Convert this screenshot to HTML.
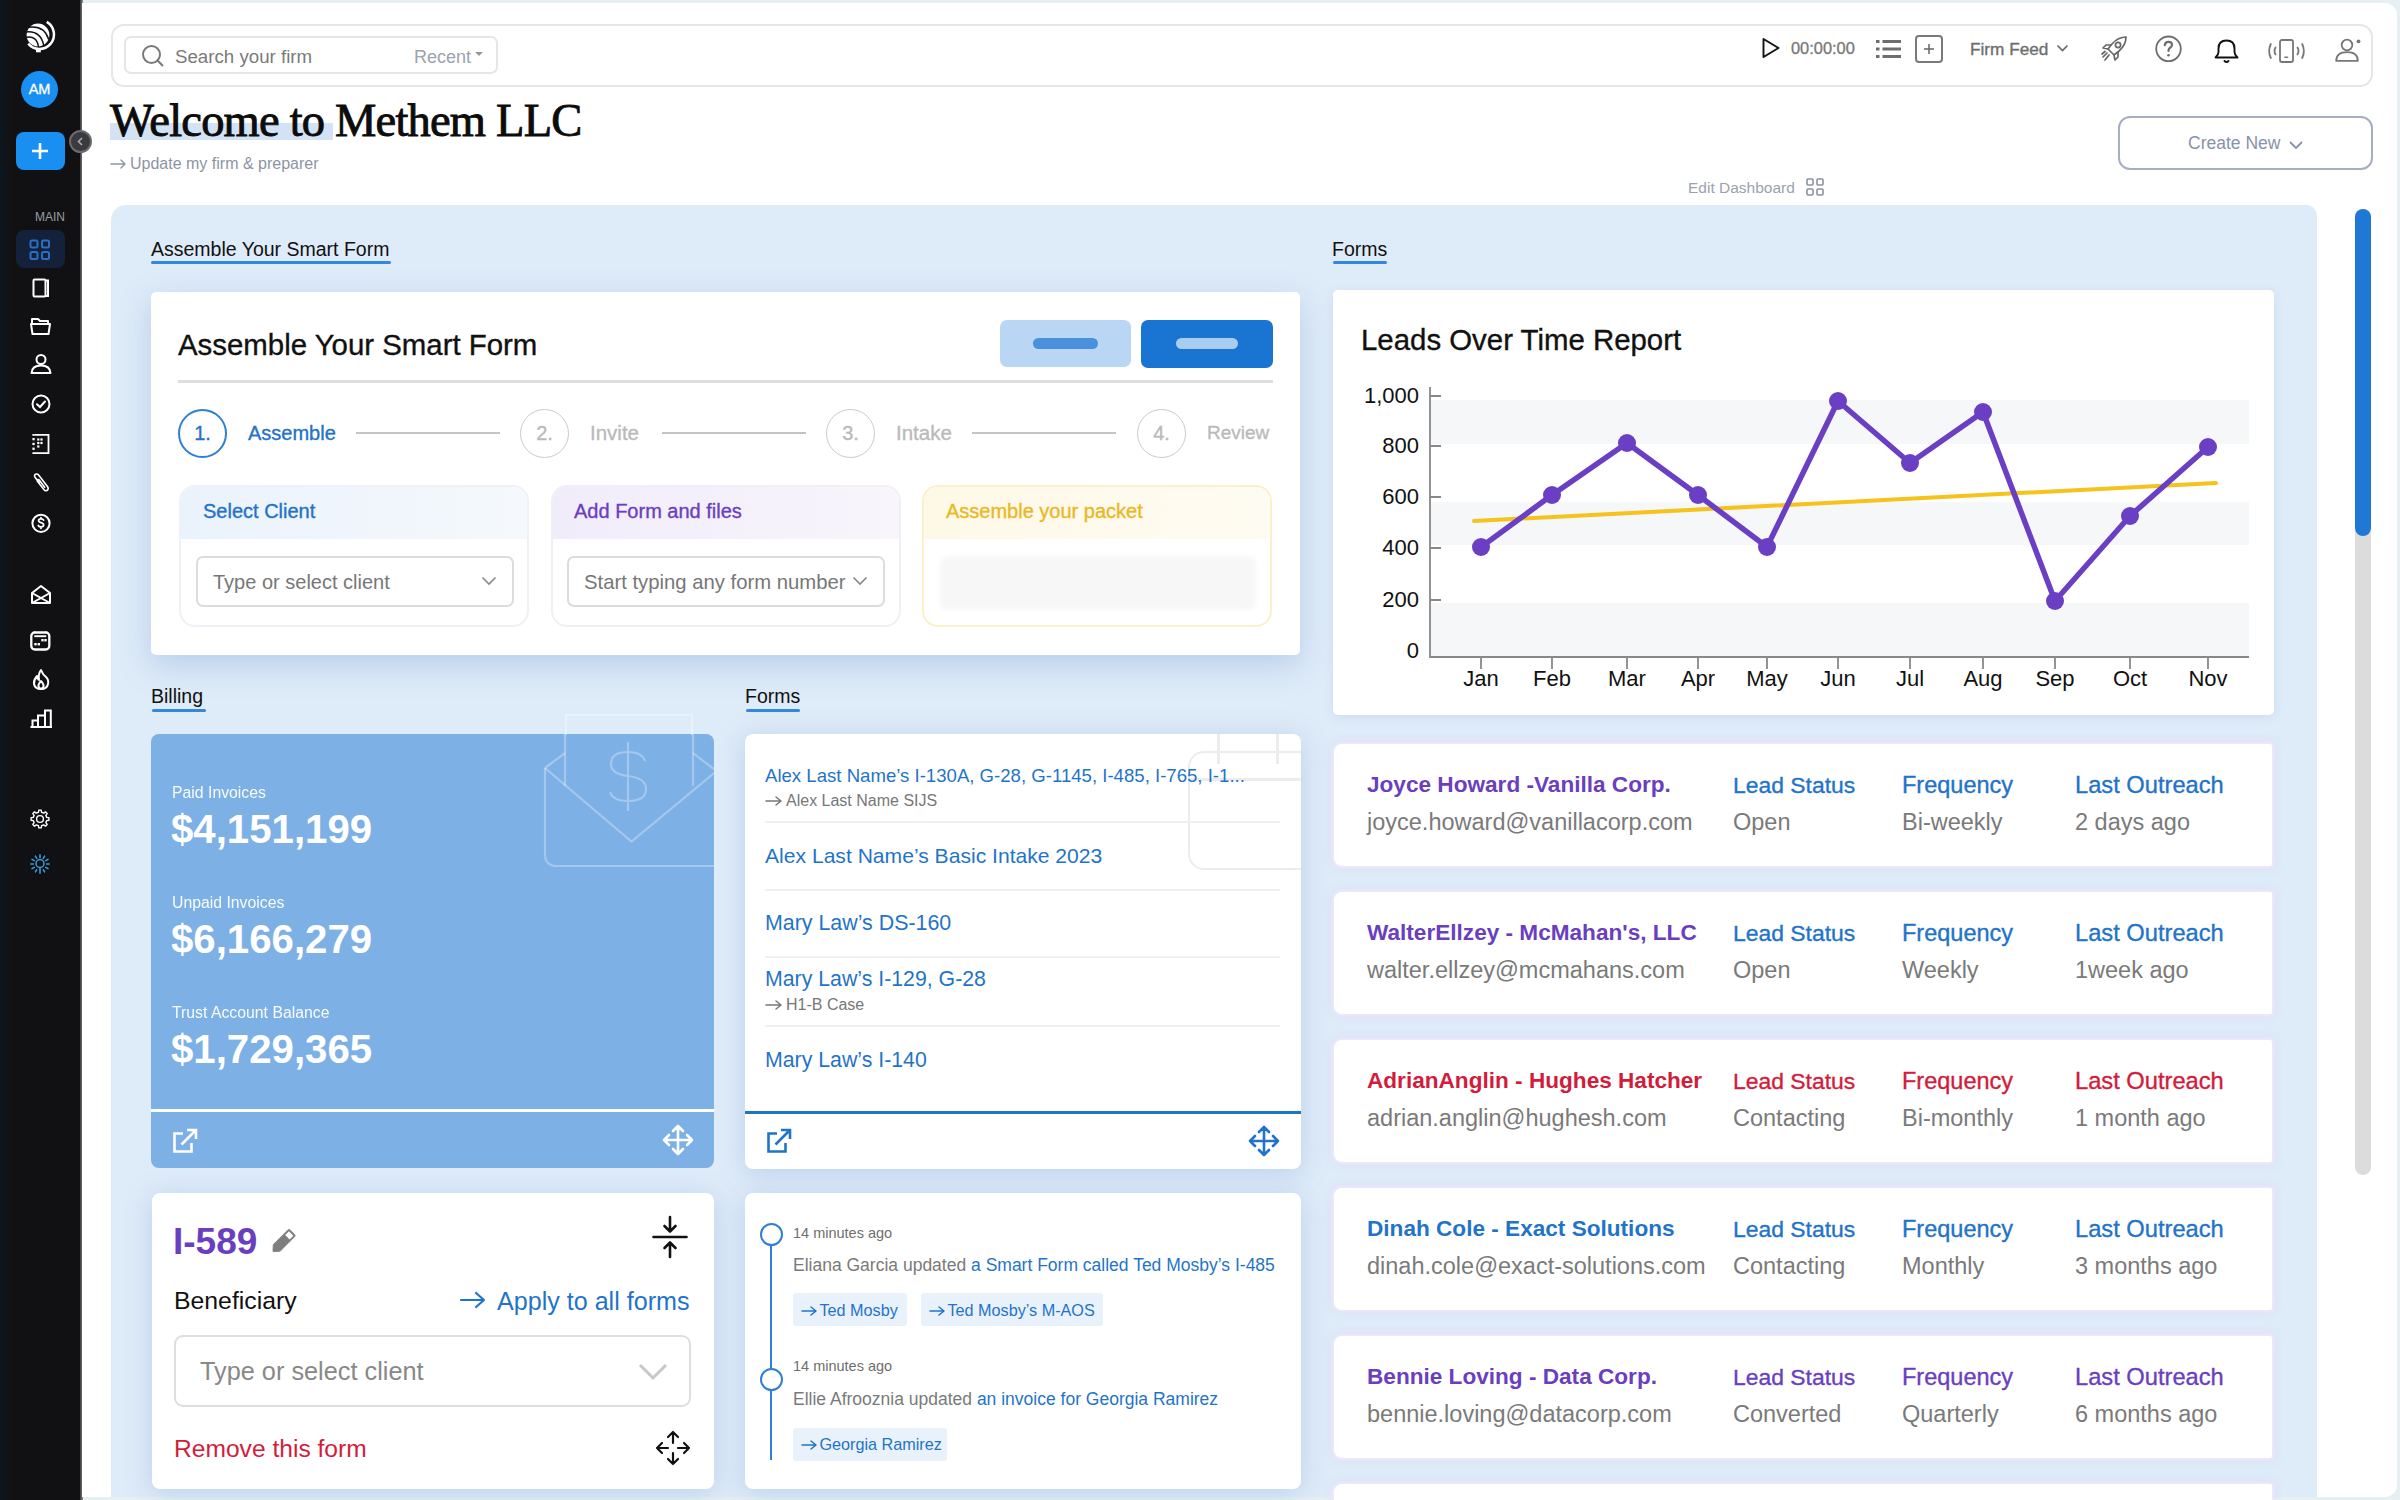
<!DOCTYPE html>
<html><head><meta charset="utf-8">
<style>
*{margin:0;padding:0;box-sizing:border-box}
html,body{width:2400px;height:1500px;overflow:hidden;background:#e6eff1;font-family:"Liberation Sans",sans-serif;color:#111}
.a{position:absolute}
.t{position:absolute;white-space:nowrap;line-height:1}
.m{-webkit-text-stroke:0.35px currentColor}
svg{position:absolute;overflow:visible}
#side{left:0;top:0;width:82px;height:1500px;background:linear-gradient(90deg,#0c1620 0,#111318 6px,#111114 12px)}
#topstrip{left:82px;top:0;width:2318px;height:4px;background:#e9f0f4}
</style></head><body>
<!-- SIDEBAR -->
<div id="side" class="a"></div>
<div class="a" style="left:79.5px;top:0;width:3px;height:1500px;background:linear-gradient(90deg,#3a3a3c,#6a6a6c 60%,#9a9a9c)"></div>
<div class="a" style="left:82px;top:3px;width:2315px;height:1494px;background:#fff;border-radius:0 12px 12px 0"></div>

<!-- sidebar content -->
<svg style="left:20px;top:15px" width="40" height="40" viewBox="0 0 40 40">
  <circle cx="18" cy="20" r="11.4" fill="#fff"/>
  <g fill="none" stroke="#111214" stroke-width="1.5" stroke-linecap="round">
    <path d="M9.5 12.3Q24 10.5 28.5 24"/><path d="M6 17Q21 15.5 23.8 31"/><path d="M6.5 22.3Q17 20.5 18.5 32"/>
  </g>
  <path d="M26.75 6.94A14.5 14.5 0 1 1 8.23 28.63" fill="none" stroke="#fff" stroke-width="2.5" stroke-linecap="butt"/>
  <rect x="16" y="33.5" width="4.8" height="3.8" fill="#fff"/>
</svg>
<div class="a" style="left:21px;top:71px;width:37px;height:37px;border-radius:50%;background:#1a8ff2"></div>
<div class="t m" style="left:21px;top:82px;width:37px;text-align:center;font-size:14.5px;color:#fff">AM</div>
<div class="a" style="left:16px;top:132px;width:49px;height:38px;border-radius:8px;background:#1a8ff2"></div>
<svg style="left:30px;top:141px" width="20" height="20" viewBox="0 0 20 20" stroke="#fff" stroke-width="2.6"><path d="M10 2V18M2 10H18"/></svg>
<div class="a" style="left:69px;top:130px;width:23px;height:23px;border-radius:50%;background:#3a3b3e;border:2px solid #6a6b6e"></div>
<svg style="left:76px;top:137px" width="9" height="9" viewBox="0 0 9 9" fill="none" stroke="#aaa" stroke-width="1.6"><path d="M6 1L2.5 4.5L6 8"/></svg>
<div class="t" style="left:35px;top:211px;font-size:12px;color:#9a9ca0">MAIN</div>
<div class="a" style="left:16px;top:230px;width:49px;height:38px;border-radius:8px;background:#13223a"></div>
<svg style="left:29px;top:239px" width="22" height="22" viewBox="0 0 22 22" fill="none" stroke="#2a6fc4" stroke-width="2"><rect x="1.5" y="1.5" width="7" height="7" rx="1.5"/><rect x="13" y="1.5" width="7" height="7" rx="1.5"/><rect x="1.5" y="13" width="7" height="7" rx="1.5"/><rect x="13" y="13" width="7" height="7" rx="1.5"/></svg>
<svg style="left:30px;top:277px" width="22" height="22" viewBox="0 0 22 22" fill="none" stroke="#fff" stroke-width="2"><rect x="3.5" y="2.5" width="12" height="17" rx="1"/><path d="M16 3.5H18V19H16"/></svg>
<svg style="left:29px;top:315px" width="24" height="22" viewBox="0 0 24 22" fill="none" stroke="#fff" stroke-width="2" stroke-linejoin="round"><path d="M3 8V4H9L11 6H19V8"/><path d="M2 9H21L19.5 19H3.5Z"/></svg>
<svg style="left:29px;top:353px" width="24" height="22" viewBox="0 0 24 22" fill="none" stroke="#fff" stroke-width="2"><circle cx="12" cy="6.5" r="4.5"/><path d="M2.5 20Q3 12.5 12 12.5Q21 12.5 21.5 20Z" stroke-linejoin="round"/></svg>
<svg style="left:30px;top:393px" width="22" height="22" viewBox="0 0 22 22" fill="none" stroke="#fff" stroke-width="2"><circle cx="11" cy="11" r="8.5"/><path d="M7 11.2L10 14L15 8.5" stroke-linecap="round"/></svg>
<svg style="left:30px;top:433px" width="22" height="22" viewBox="0 0 22 22" fill="#fff"><path d="M2.4 1H19.4V21H2.4V19.2H17.6V2.8H4.2V1Z"/><rect x="2.4" y="1" width="1.8" height="1.8"/><rect x="2.4" y="5" width="2.3" height="2.3"/><rect x="2.4" y="9.8" width="2.3" height="2.3"/><rect x="2.4" y="14.6" width="2.3" height="2.3"/><rect x="7.2" y="5.4" width="2.2" height="2.2"/><rect x="10.4" y="5.4" width="2.2" height="2.2"/><rect x="7.2" y="8.9" width="2.2" height="2.2"/><rect x="10.4" y="8.9" width="2.2" height="2.2"/><rect x="7.2" y="12.4" width="2.2" height="2.2"/></svg>
<svg style="left:30px;top:472px" width="22" height="22" viewBox="0 0 22 22" fill="none" stroke="#fff" stroke-width="1.6" stroke-linecap="round"><path d="M9.2 10.8L5 5.2Q3.8 3.3 5.6 2.3Q7.3 1.4 8.6 3.1L17.6 14.8Q19 17 17.2 18.3Q15.3 19.5 13.9 17.6L7.4 9.2Q6.8 8.2 7.7 7.7Q8.5 7.2 9.2 8.1L14.7 15.2"/></svg>
<svg style="left:30px;top:512px" width="22" height="22" viewBox="0 0 22 22" fill="none" stroke="#fff" stroke-width="2"><circle cx="11" cy="11.3" r="8.6"/><path d="M13.6 8.2Q13 6.9 11 6.9Q8.6 6.9 8.6 8.6Q8.6 10.1 11 10.6Q13.6 11.2 13.6 13Q13.6 14.9 11 14.9Q9 14.9 8.3 13.5M11 5.6V6.9M11 14.9V16.4" stroke-width="1.7" stroke-linecap="round"/></svg>

<svg style="left:29px;top:583px" width="24" height="24" viewBox="0 0 24 24" fill="none" stroke="#fff" stroke-width="2" stroke-linejoin="round"><path d="M3 10L12 3L21 10V20H3Z"/><path d="M3 10L21 20M21 10L3 20"/></svg>
<svg style="left:29px;top:629px" width="24" height="24" viewBox="0 0 24 24" fill="none" stroke="#fff" stroke-width="2.3"><rect x="2.3" y="3.5" width="18" height="17" rx="3.5"/><path d="M5.5 2.5V4M17 2.5V4" stroke-width="1.6"/><path d="M5.3 7.2H17.2" stroke-width="1.9"/><g fill="#fff" stroke="none"><rect x="12.3" y="10" width="2.4" height="2.4"/><rect x="15.3" y="10" width="2.4" height="2.4"/><rect x="5.3" y="14" width="2.4" height="2.4"/><rect x="8.6" y="14" width="2.4" height="2.4"/></g></svg>
<svg style="left:30px;top:668px" width="22" height="24" viewBox="0 0 22 24" fill="none" stroke="#fff" stroke-width="2" stroke-linejoin="round"><path d="M11 2Q13 7 16 9Q19 12 18 16Q17 21 11 21Q5 21 4 16Q3.5 12 7 8Q7 11 9 12Q8 6 11 2Z"/><path d="M11 21Q8 20 8.5 17Q9 15 11 13Q13 15 13.5 17Q14 20 11 21"/></svg>
<svg style="left:29px;top:707px" width="24" height="22" viewBox="0 0 24 22" fill="none" stroke="#fff" stroke-width="2"><path d="M1.5 20H23"/><path d="M3.5 20V13.5H9V20M9 20V8.5H16V20M16 20V3.5H21.8V20"/></svg>
<svg style="left:28px;top:807px" width="24" height="24" viewBox="0 0 24 24" fill="none" stroke="#fff" stroke-width="1.4" stroke-linejoin="round"><circle cx="12" cy="12" r="3.4"/><path d="M18.71 10.39 L20.92 10.80 L20.92 13.20 L18.71 13.61 L17.88 15.61 L19.15 17.46 L17.46 19.15 L15.61 17.88 L13.61 18.71 L13.20 20.92 L10.80 20.92 L10.39 18.71 L8.39 17.88 L6.54 19.15 L4.85 17.46 L6.12 15.61 L5.29 13.61 L3.08 13.20 L3.08 10.80 L5.29 10.39 L6.12 8.39 L4.85 6.54 L6.54 4.85 L8.39 6.12 L10.39 5.29 L10.80 3.08 L13.20 3.08 L13.61 5.29 L15.61 6.12 L17.46 4.85 L19.15 6.54 L17.88 8.39Z"/></svg>
<svg style="left:28px;top:852px" width="24" height="24" viewBox="0 0 24 24" fill="none" stroke="#3a9ee0" stroke-width="1.5" stroke-linecap="round"><circle cx="12" cy="11.5" r="4"/><path d="M12.00 16.20L12.00 21.20M8.70 17.72L7.40 19.97M6.28 15.30L4.03 16.60M5.40 12.00L2.80 12.00M6.28 8.70L4.03 7.40M8.70 6.28L7.40 4.03M12.00 5.40L12.00 2.80M15.30 6.28L16.60 4.03M17.72 8.70L19.97 7.40M18.60 12.00L21.20 12.00M17.72 15.30L19.97 16.60M15.30 17.72L16.60 19.97"/></svg>


<!-- TOP BAR -->
<div class="a" style="left:111px;top:24px;width:2262px;height:63px;border:2px solid #e6e6e6;border-radius:13px"></div>
<div class="a" style="left:124px;top:36px;width:374px;height:38px;border:2px solid #e6e6e6;border-radius:7px"></div>


<!-- top bar content -->
<svg style="left:141px;top:44px" width="24" height="24" viewBox="0 0 24 24" fill="none" stroke="#7a7a7a" stroke-width="2"><circle cx="10.5" cy="10.5" r="8.5"/><path d="M16.8 16.8L21.5 21.5" stroke-linecap="round"/></svg>
<div class="t" style="left:175px;top:47.5px;font-size:18.7px;color:#7a7a7a">Search your firm</div>
<div class="t" style="left:414px;top:47.5px;font-size:18px;color:#9ba3ae">Recent</div>
<svg style="left:475px;top:52px" width="8" height="5" viewBox="0 0 8 5" fill="#999"><path d="M0 0H8L4 4Z"/></svg>
<svg style="left:1761px;top:37px" width="24" height="24" viewBox="0 0 24 24" fill="none" stroke="#111" stroke-width="1.9" stroke-linejoin="round"><path d="M2.5 2L17.5 11L2.5 20Z"/></svg>
<div class="t m" style="left:1791px;top:39.5px;font-size:16.4px;color:#7a7a7a">00:00:00</div>
<svg style="left:1876px;top:38px" width="26" height="22" viewBox="0 0 26 22" fill="#6e6e6e"><rect x="0" y="2" width="3.5" height="3"/><rect x="0" y="9.5" width="3.5" height="3"/><rect x="0" y="17" width="3.5" height="3"/><rect x="6.5" y="2" width="18.5" height="3"/><rect x="6.5" y="9.5" width="18.5" height="3"/><rect x="6.5" y="17" width="18.5" height="3"/></svg>
<div class="a" style="left:1915px;top:35px;width:28px;height:28px;border:2px solid #7a7a7a;border-radius:4px"></div>
<svg style="left:1923px;top:43px" width="12" height="12" viewBox="0 0 12 12" stroke="#666" stroke-width="1.5"><path d="M6 1V11M1 6H11"/></svg>
<div class="t m" style="left:1970px;top:41px;font-size:17.2px;color:#6e6e6e">Firm Feed</div>
<svg style="left:2056px;top:44px" width="13" height="9" viewBox="0 0 13 9" fill="none" stroke="#666" stroke-width="1.6"><path d="M1.5 1.5L6.5 6.5L11.5 1.5"/></svg>
<svg style="left:2099px;top:34px" width="30" height="30" viewBox="0 0 30 30" fill="none" stroke="#666" stroke-width="1.7" stroke-linejoin="round"><path d="M27 3Q19 3 13 10L9 15L15 21L20 17Q27 11 27 3Z"/><circle cx="19" cy="11" r="2.6"/><path d="M12 11L7 11L4 14L9 15"/><path d="M19 18L19 23L16 26L15 21"/><path d="M8 19L4 23M10 21L6 26M6 17.5L3 20" stroke-linecap="round"/></svg>
<svg style="left:2153px;top:34px" width="30" height="30" viewBox="0 0 30 30" fill="none" stroke="#6e6e6e" stroke-width="1.8"><circle cx="15.5" cy="14.8" r="12.3"/><path d="M11.8 11.2Q12 7.8 15.6 7.8Q19 7.8 19 10.8Q19 12.8 16.8 14Q15.5 14.8 15.5 17" stroke-width="2.2" stroke-linecap="round"/><circle cx="15.5" cy="21.3" r="1.3" fill="#6e6e6e" stroke="none"/></svg>
<svg style="left:2211px;top:36px" width="30" height="30" viewBox="0 0 30 30" fill="none" stroke="#111" stroke-width="1.9" stroke-linejoin="round"><path d="M4.5 21.5H26.5Q23.5 19 23.5 16V12.5Q23.5 4.5 15.5 4.5Q7.5 4.5 7.5 12.5V16Q7.5 19 4.5 21.5Z"/><path d="M13.5 25Q15.5 27 17.5 25" stroke-linecap="round"/></svg>
<svg style="left:2266px;top:36px" width="40" height="30" viewBox="0 0 40 30" fill="none" stroke="#777" stroke-width="1.8" stroke-linecap="round"><rect x="14" y="4" width="13" height="22" rx="2"/><path d="M19 21.2H21.5" stroke-width="1.6"/><path d="M9.5 11.5Q7.5 15 9.5 18.5M4.8 8Q1.5 15 4.8 22M31.5 11.5Q33.5 15 31.5 18.5M36.2 8Q39.5 15 36.2 22"/></svg>
<svg style="left:2333px;top:36px" width="32" height="28" viewBox="0 0 32 28" fill="none" stroke="#777" stroke-width="1.8"><circle cx="14" cy="9" r="5.3"/><path d="M3.2 24.8Q3.2 16.2 14 16.2Q24.8 16.2 24.8 24.8Z" stroke-linejoin="round"/><circle cx="25.5" cy="5.3" r="1.9" fill="#777" stroke="none"/></svg>

<!-- create new / edit dashboard -->
<div class="a" style="left:2118px;top:116px;width:255px;height:54px;border:2px solid #a5afc0;border-radius:12px"></div>
<div class="t" style="left:2188px;top:135px;font-size:17.5px;color:#8793a6">Create New</div>
<svg style="left:2288px;top:140px" width="16" height="10" viewBox="0 0 16 10" fill="none" stroke="#8793a6" stroke-width="1.8"><path d="M2 2L8 8L14 2"/></svg>
<div class="t" style="left:1688px;top:180px;font-size:15.5px;color:#9aa3ad">Edit Dashboard</div>
<svg style="left:1806px;top:178px" width="18" height="18" viewBox="0 0 18 18" fill="none" stroke="#8a939d" stroke-width="1.6"><rect x="1" y="1" width="6" height="6" rx="1"/><rect x="11" y="1" width="6" height="6" rx="1"/><rect x="1" y="11" width="6" height="6" rx="1"/><rect x="11" y="11" width="6" height="6" rx="1"/></svg>

<!-- HEADING -->
<div class="a" style="left:110px;top:123px;width:223px;height:17px;background:#d3e3f5"></div>
<div class="t" style="left:110px;top:98px;font-family:'Liberation Serif',serif;font-size:46.5px;letter-spacing:-0.8px;-webkit-text-stroke:0.9px #0c0c0c;color:#0c0c0c">Welcome to Methem LLC</div>
<svg style="left:110px;top:159px" width="16" height="10" viewBox="0 0 16 10" fill="none" stroke="#8c94a5" stroke-width="1.4" stroke-linecap="round" stroke-linejoin="round"><path d="M1 5H15M11 1L15 5L11 9"/></svg>
<div class="t" style="left:130px;top:155.5px;font-size:16px;color:#8c94a5">Update my firm &amp; preparer</div>

<!-- BLUE PANEL -->
<div class="a" style="left:111px;top:205px;width:2206px;height:1292px;background:#deebf8;border-radius:15px 11px 0 0"></div>


<!-- section titles -->
<div class="t" style="left:151px;top:240px;font-size:19.5px;color:#111">Assemble Your Smart Form</div>
<div class="a" style="left:151px;top:261px;width:240px;height:2.5px;background:#3587dd;border-radius:2px"></div>
<div class="t" style="left:1332px;top:240px;font-size:19.5px;color:#111">Forms</div>
<div class="a" style="left:1333px;top:261px;width:54px;height:2.5px;background:#3587dd;border-radius:2px"></div>
<div class="t" style="left:151px;top:687px;font-size:19.5px;color:#111">Billing</div>
<div class="a" style="left:152px;top:709px;width:54px;height:2.5px;background:#3587dd;border-radius:2px"></div>
<div class="t" style="left:745px;top:687px;font-size:19.5px;color:#111">Forms</div>
<div class="a" style="left:746px;top:709px;width:54px;height:2.5px;background:#3587dd;border-radius:2px"></div>

<!-- ASSEMBLE CARD -->
<div class="a" style="left:151px;top:292px;width:1149px;height:363px;background:#fff;border-radius:5px;box-shadow:0 10px 30px rgba(125,160,215,.38)"></div>
<div class="t m" style="left:178px;top:330px;font-size:29.4px;color:#111">Assemble Your Smart Form</div>
<div class="a" style="left:1000px;top:320px;width:131px;height:47px;background:#b9d7f5;border-radius:7px"></div>
<div class="a" style="left:1033px;top:338px;width:65px;height:11px;background:#4a90dc;border-radius:6px"></div>
<div class="a" style="left:1141px;top:320px;width:132px;height:48px;background:#1a74d2;border-radius:7px"></div>
<div class="a" style="left:1176px;top:338px;width:62px;height:11px;background:#a9cdf1;border-radius:6px"></div>
<div class="a" style="left:178px;top:380px;width:1095px;height:2.5px;background:#dedede"></div>
<!-- steps -->
<div class="a" style="left:178px;top:409px;width:49px;height:49px;border:2px solid #2f7fd3;border-radius:50%"></div>
<div class="t m" style="left:178px;top:423px;width:49px;text-align:center;font-size:20px;color:#2372c8">1.</div>
<div class="t m" style="left:248px;top:423px;font-size:20px;color:#2372c8">Assemble</div>
<div class="a" style="left:356px;top:432px;width:144px;height:2px;background:#c4c4c4"></div>
<div class="a" style="left:520px;top:409px;width:49px;height:49px;border:1.8px solid #cacaca;border-radius:50%"></div>
<div class="t m" style="left:520px;top:423px;width:49px;text-align:center;font-size:20px;color:#bababa">2.</div>
<div class="t m" style="left:590px;top:423px;font-size:20.5px;color:#bababa">Invite</div>
<div class="a" style="left:662px;top:432px;width:144px;height:2px;background:#c4c4c4"></div>
<div class="a" style="left:826px;top:409px;width:49px;height:49px;border:1.8px solid #cacaca;border-radius:50%"></div>
<div class="t m" style="left:826px;top:423px;width:49px;text-align:center;font-size:20px;color:#bababa">3.</div>
<div class="t m" style="left:896px;top:423px;font-size:20.5px;color:#bababa">Intake</div>
<div class="a" style="left:972px;top:432px;width:144px;height:2px;background:#c4c4c4"></div>
<div class="a" style="left:1137px;top:409px;width:49px;height:49px;border:1.8px solid #cacaca;border-radius:50%"></div>
<div class="t m" style="left:1137px;top:423px;width:49px;text-align:center;font-size:20px;color:#bababa">4.</div>
<div class="t m" style="left:1207px;top:423px;font-size:19px;color:#bababa">Review</div>
<!-- subcards -->
<div class="a" style="left:179px;top:485px;width:350px;height:142px;border:2px solid #eef2f7;border-radius:16px;overflow:hidden;background:#fff">
  <div class="a" style="left:0;top:0;width:100%;height:52px;background:linear-gradient(90deg,#eaf2fb,#f5f9fd)"></div>
</div>
<div class="t m" style="left:203px;top:501px;font-size:20px;color:#2372c8">Select Client</div>
<div class="a" style="left:196px;top:556px;width:318px;height:51px;border:2px solid #dcdcdc;border-radius:7px;background:#fff"></div>
<div class="t" style="left:213px;top:572px;font-size:20px;color:#777">Type or select client</div>
<svg style="left:481px;top:576px" width="16" height="10" viewBox="0 0 16 10" fill="none" stroke="#888" stroke-width="1.6"><path d="M1.5 1.5L8 8L14.5 1.5"/></svg>

<div class="a" style="left:551px;top:485px;width:350px;height:142px;border:2px solid #f1eff6;border-radius:16px;overflow:hidden;background:#fff">
  <div class="a" style="left:0;top:0;width:100%;height:52px;background:linear-gradient(90deg,#f1ecfa,#f8f5fc)"></div>
</div>
<div class="t m" style="left:574px;top:501px;font-size:20px;color:#6a3fbf">Add Form and files</div>
<div class="a" style="left:567px;top:556px;width:318px;height:51px;border:2px solid #dcdcdc;border-radius:7px;background:#fff"></div>
<div class="t" style="left:584px;top:572px;font-size:20.3px;color:#777">Start typing any form number</div>
<svg style="left:852px;top:576px" width="16" height="10" viewBox="0 0 16 10" fill="none" stroke="#888" stroke-width="1.6"><path d="M1.5 1.5L8 8L14.5 1.5"/></svg>

<div class="a" style="left:922px;top:485px;width:350px;height:142px;border:2px solid #fbf0cc;border-radius:16px;overflow:hidden;background:#fff">
  <div class="a" style="left:0;top:0;width:100%;height:52px;background:linear-gradient(90deg,#fef8e6,#fefbf2)"></div>
</div>
<div class="t m" style="left:946px;top:501px;font-size:20px;color:#e9b824">Assemble your packet</div>
<div class="a" style="left:940px;top:556px;width:316px;height:54px;background:#f7f7f7;border-radius:8px;filter:blur(2px)"></div>


<!-- CHART CARD -->
<div class="a" style="left:1333px;top:290px;width:941px;height:425px;background:#fff;border-radius:5px;box-shadow:0 2px 10px rgba(140,170,215,.2)"></div>
<div class="t m" style="left:1361px;top:325px;font-size:29.4px;color:#111">Leads Over Time Report</div>
<div class="t" style="left:1318px;top:385px;width:101px;text-align:right;font-size:22px;color:#111">1,000</div><div class="t" style="left:1318px;top:435px;width:101px;text-align:right;font-size:22px;color:#111">800</div><div class="t" style="left:1318px;top:486px;width:101px;text-align:right;font-size:22px;color:#111">600</div><div class="t" style="left:1318px;top:537px;width:101px;text-align:right;font-size:22px;color:#111">400</div><div class="t" style="left:1318px;top:589px;width:101px;text-align:right;font-size:22px;color:#111">200</div><div class="t" style="left:1318px;top:640px;width:101px;text-align:right;font-size:22px;color:#111">0</div>
<div class="t" style="left:1441px;top:668px;width:80px;text-align:center;font-size:22px;color:#111">Jan</div><div class="t" style="left:1512px;top:668px;width:80px;text-align:center;font-size:22px;color:#111">Feb</div><div class="t" style="left:1587px;top:668px;width:80px;text-align:center;font-size:22px;color:#111">Mar</div><div class="t" style="left:1658px;top:668px;width:80px;text-align:center;font-size:22px;color:#111">Apr</div><div class="t" style="left:1727px;top:668px;width:80px;text-align:center;font-size:22px;color:#111">May</div><div class="t" style="left:1798px;top:668px;width:80px;text-align:center;font-size:22px;color:#111">Jun</div><div class="t" style="left:1870px;top:668px;width:80px;text-align:center;font-size:22px;color:#111">Jul</div><div class="t" style="left:1943px;top:668px;width:80px;text-align:center;font-size:22px;color:#111">Aug</div><div class="t" style="left:2015px;top:668px;width:80px;text-align:center;font-size:22px;color:#111">Sep</div><div class="t" style="left:2090px;top:668px;width:80px;text-align:center;font-size:22px;color:#111">Oct</div><div class="t" style="left:2168px;top:668px;width:80px;text-align:center;font-size:22px;color:#111">Nov</div>
<svg style="left:1333px;top:290px" width="941" height="425" viewBox="0 0 941 425">
  <rect x="98" y="110" width="818" height="44" fill="#f6f7f8"/>
  <rect x="98" y="212" width="818" height="43" fill="#f6f7f8"/>
  <rect x="98" y="313" width="818" height="54" fill="#f6f7f8"/>
  <g stroke="#888" stroke-width="1.8" fill="none">
    <path d="M97 97V367H916"/>
    <path d="M97 106H108M97 156H108M97 207H108M97 258H108M97 310H108"/>
    <path d="M148 367V379"/><path d="M219 367V379"/><path d="M294 367V379"/><path d="M365 367V379"/><path d="M434 367V379"/><path d="M505 367V379"/><path d="M577 367V379"/><path d="M650 367V379"/><path d="M722 367V379"/><path d="M797 367V379"/><path d="M875 367V379"/>
  </g>
  <path d="M141 231L883 193" stroke="#f6c21c" stroke-width="4" stroke-linecap="round"/>
  <polyline points="148,257 219,205 294,153 365,205 434,257 505,111 577,173 650,122 722,311 797,226 875,157" fill="none" stroke="#6a3fc4" stroke-width="5.5" stroke-linejoin="round"/>
  <g fill="#6a3fc4"><circle cx="148" cy="257" r="9"/><circle cx="219" cy="205" r="9"/><circle cx="294" cy="153" r="9"/><circle cx="365" cy="205" r="9"/><circle cx="434" cy="257" r="9"/><circle cx="505" cy="111" r="9"/><circle cx="577" cy="173" r="9"/><circle cx="650" cy="122" r="9"/><circle cx="722" cy="311" r="9"/><circle cx="797" cy="226" r="9"/><circle cx="875" cy="157" r="9"/></g>
</svg>



<!-- BILLING CARD -->
<div class="a" style="left:151px;top:734px;width:563px;height:434px;background:#7db0e5;border-radius:8px;overflow:hidden"><svg style="left:394px;top:-20px" width="180" height="170" viewBox="0 0 180 170" fill="none" stroke="rgba(255,255,255,.3)" stroke-width="2.2"><path d="M20 1V72M148 1V72"/><path d="M0 54L20 39M148 39L170 56"/><path d="M0 54V140Q0 152 12 152H180"/><path d="M0 54L86.5 127.5L180 50"/><path d="M100 47Q97 38 83 38Q66 38 66 50Q66 60 83 62Q101 64 101 75Q101 87 83 87Q68 87 65 78M83 28V97"/></svg></div>
<div class="a" style="left:565px;top:714px;width:128px;height:21px;border:2px solid rgba(255,255,255,.35);border-bottom:none"></div>
<div class="t" style="left:172px;top:784.6px;font-size:15.8px;color:#fff;opacity:.95">Paid Invoices</div>
<div class="t" style="left:171px;top:810.0px;font-size:40.2px;font-weight:bold;color:#fff">$4,151,199</div>
<div class="t" style="left:172px;top:894.6px;font-size:15.8px;color:#fff;opacity:.95">Unpaid Invoices</div>
<div class="t" style="left:171px;top:920.0px;font-size:40.2px;font-weight:bold;color:#fff">$6,166,279</div>
<div class="t" style="left:172px;top:1004.6px;font-size:15.8px;color:#fff;opacity:.95">Trust Account Balance</div>
<div class="t" style="left:171px;top:1030.0px;font-size:40.2px;font-weight:bold;color:#fff">$1,729,365</div>
<div class="a" style="left:151px;top:1109px;width:563px;height:2.5px;background:#fff"></div>
<svg style="left:171px;top:1127px" width="28" height="28" viewBox="0 0 28 28" fill="none" stroke="#fff" stroke-width="2.6"><path d="M12 6.5H3.5V24.5H20.5V16"/><path d="M10.5 17.5L24.5 3.5M16 3H25V12" stroke-linecap="butt"/></svg>
<svg style="left:662px;top:1124px" width="32" height="32" viewBox="-16 -16 32 32" fill="none" stroke="#fff" stroke-width="2.6" stroke-linecap="round" stroke-linejoin="round"><path d="M0 -14V14M-14 0H14M-5 -9L0 -14L5 -9M-5 9L0 14L5 9M-9 -5L-14 0L-9 5M9 -5L14 0L9 5"/></svg>

<!-- FORMS LIST CARD -->
<div class="a" style="left:745px;top:734px;width:556px;height:435px;background:#fff;border-radius:8px;overflow:hidden;box-shadow:0 4px 26px rgba(125,160,215,.35)"><div class="a" style="left:443px;top:17px;width:140px;height:119px;border:2.5px solid #ececec;border-radius:16px"></div><div class="a" style="left:443px;top:44px;width:140px;height:2.5px;background:#ececec"></div><div class="a" style="left:472px;top:0;width:2.5px;height:30px;background:#ececec"></div><div class="a" style="left:531px;top:0;width:2.5px;height:30px;background:#ececec"></div></div>
<div class="t" style="left:765px;top:767.3px;font-size:18.6px;color:#1f74c9">Alex Last Name’s I-130A, G-28, G-1145, I-485, I-765, I-1...</div>
<svg style="left:765px;top:796px" width="17" height="10" viewBox="0 0 17 10" fill="none" stroke="#777" stroke-width="1.5" stroke-linecap="round" stroke-linejoin="round"><path d="M1 5H16M11 1L16 5L11 9"/></svg><div class="t" style="left:786px;top:792.5px;font-size:16px;color:#777">Alex Last Name SIJS</div>
<div class="t" style="left:765px;top:845.1px;font-size:21.1px;color:#1f74c9">Alex Last Name’s Basic Intake 2023</div>
<div class="t" style="left:765px;top:912.9px;font-size:21.4px;color:#1f74c9">Mary Law’s DS-160</div>
<div class="t" style="left:765px;top:969.0px;font-size:21.3px;color:#1f74c9">Mary Law’s I-129, G-28</div>
<svg style="left:765px;top:1000px" width="17" height="10" viewBox="0 0 17 10" fill="none" stroke="#777" stroke-width="1.5" stroke-linecap="round" stroke-linejoin="round"><path d="M1 5H16M11 1L16 5L11 9"/></svg><div class="t" style="left:786px;top:996.5px;font-size:16px;color:#777">H1-B Case</div>
<div class="t" style="left:765px;top:1050.0px;font-size:21.3px;color:#1f74c9">Mary Law’s I-140</div>
<div class="a" style="left:765px;top:821px;width:515px;height:2px;background:#f0f0f0"></div>
<div class="a" style="left:765px;top:889px;width:515px;height:2px;background:#f0f0f0"></div>
<div class="a" style="left:765px;top:956px;width:515px;height:2px;background:#f0f0f0"></div>
<div class="a" style="left:765px;top:1025px;width:515px;height:2px;background:#f0f0f0"></div>
<div class="a" style="left:745px;top:1111px;width:556px;height:2.5px;background:#1f74c9"></div>
<svg style="left:765px;top:1127px" width="28" height="28" viewBox="0 0 28 28" fill="none" stroke="#1f74c9" stroke-width="2.6"><path d="M12 6.5H3.5V24.5H20.5V16"/><path d="M10.5 17.5L24.5 3.5M16 3H25V12" stroke-linecap="butt"/></svg>
<svg style="left:1248px;top:1125px" width="32" height="32" viewBox="-16 -16 32 32" fill="none" stroke="#1f74c9" stroke-width="2.6" stroke-linecap="round" stroke-linejoin="round"><path d="M0 -14V14M-14 0H14M-5 -9L0 -14L5 -9M-5 9L0 14L5 9M-9 -5L-14 0L-9 5M9 -5L14 0L9 5"/></svg>

<!-- I-589 CARD -->
<div class="a" style="left:152px;top:1193px;width:562px;height:296px;background:#fff;border-radius:8px;box-shadow:0 4px 26px rgba(125,160,215,.35)"></div>
<div class="t" style="left:173px;top:1223.2px;font-size:37px;font-weight:bold;color:#6a3fbf">I-589</div>
<svg style="left:260px;top:1210px" width="50" height="55" viewBox="260 1210 50 55"><g transform="translate(282.75 1241.85) rotate(-45)"><path d="M-13.5 0.8Q-13.8 0 -13.2 -0.6L-8.6 -4.75H12Q13.6 -4.75 13.6 -3.2V3.2Q13.6 4.75 12 4.75H-8.6L-13.2 0.6Z" fill="#7e7e7e" stroke="#7e7e7e" stroke-width="0.8" stroke-linejoin="round"/><rect x="6.6" y="-3.1" width="5.2" height="6.2" fill="#fff"/></g></svg>
<svg style="left:652px;top:1214px" width="36" height="46" viewBox="0 0 36 46" fill="none" stroke="#111" stroke-width="2.6" stroke-linecap="round" stroke-linejoin="round"><path d="M1.5 23H34.5"/><path d="M18 3V17.5M12.5 12L18 17.5L23.5 12"/><path d="M18 43V28.5M12.5 34L18 28.5L23.5 34"/></svg>
<div class="t" style="left:174px;top:1289.0px;font-size:24.8px;color:#111">Beneficiary</div>
<svg style="left:460px;top:1292px" width="25" height="16" viewBox="0 0 25 16" fill="none" stroke="#1f74c9" stroke-width="2.2" stroke-linecap="round" stroke-linejoin="round"><path d="M1 8H24M16 1L24 8L16 15"/></svg><div class="t" style="left:497px;top:1288.8px;font-size:25.1px;color:#1f74c9">Apply to all forms</div>
<div class="a" style="left:174px;top:1335px;width:517px;height:72px;border:2px solid #dedede;border-radius:9px"></div>
<div class="t" style="left:200px;top:1358.6px;font-size:25.3px;color:#888">Type or select client</div>
<svg style="left:638px;top:1362px" width="30" height="19" viewBox="0 0 30 19" fill="none" stroke="#c8c8c8" stroke-width="3"><path d="M2 3L15 16L28 3"/></svg>
<div class="t" style="left:174px;top:1436.7px;font-size:24.6px;color:#d21c3c">Remove this form</div>
<svg style="left:655px;top:1430px" width="36" height="36" viewBox="-18 -18 36 36" fill="none" stroke="#111" stroke-width="2.2" stroke-linecap="round" stroke-linejoin="round"><path d="M-16 0H-5M5 0H16M0 -16V-5M0 5V16M-11 -5L-16 0L-11 5M11 -5L16 0L11 5M-5 -11L0 -16L5 -11M-5 11L0 16L5 11"/></svg>

<!-- ACTIVITY CARD -->
<div class="a" style="left:745px;top:1193px;width:556px;height:296px;background:#fff;border-radius:8px;box-shadow:0 4px 26px rgba(125,160,215,.35)"></div>
<div class="a" style="left:769.5px;top:1244px;width:2.5px;height:216px;background:#2f7fd3"></div>
<div class="a" style="left:760px;top:1222.5px;width:23px;height:23px;border:2.5px solid #2f7fd3;border-radius:50%;background:#fff"></div>
<div class="a" style="left:760px;top:1367.5px;width:23px;height:23px;border:2.5px solid #2f7fd3;border-radius:50%;background:#fff"></div>
<div class="t" style="left:793px;top:1225.7px;font-size:14.5px;color:#6e6e6e">14 minutes ago</div>
<div class="t" style="left:793px;top:1257.2px;font-size:17.5px;color:#7a7a7a">Eliana Garcia updated <span style="color:#1f74c9">a Smart Form called Ted Mosby’s I-485</span></div>
<div class="a" style="left:792.5px;top:1293px;width:114.5px;height:33px;background:#e9f1fb;border-radius:3px"></div>
<svg style="left:800.5px;top:1306px" width="16" height="10" viewBox="0 0 16 10" fill="none" stroke="#1f74c9" stroke-width="1.5" stroke-linecap="round" stroke-linejoin="round"><path d="M1 5H15M10 1L15 5L10 9"/></svg><div class="t" style="left:819.5px;top:1302.3px;font-size:16.2px;color:#1f74c9">Ted Mosby</div>
<div class="a" style="left:920.5px;top:1293px;width:182.5px;height:33px;background:#e9f1fb;border-radius:3px"></div>
<svg style="left:928.5px;top:1306px" width="16" height="10" viewBox="0 0 16 10" fill="none" stroke="#1f74c9" stroke-width="1.5" stroke-linecap="round" stroke-linejoin="round"><path d="M1 5H15M10 1L15 5L10 9"/></svg><div class="t" style="left:947.5px;top:1302.3px;font-size:16.2px;color:#1f74c9">Ted Mosby’s M-AOS</div>
<div class="t" style="left:793px;top:1358.7px;font-size:14.5px;color:#6e6e6e">14 minutes ago</div>
<div class="t" style="left:793px;top:1391.2px;font-size:17.5px;color:#7a7a7a">Ellie Afrooznia updated <span style="color:#1f74c9">an invoice for Georgia Ramirez</span></div>
<div class="a" style="left:792.5px;top:1428px;width:154.5px;height:33px;background:#e9f1fb;border-radius:3px"></div>
<svg style="left:800.5px;top:1440px" width="16" height="10" viewBox="0 0 16 10" fill="none" stroke="#1f74c9" stroke-width="1.5" stroke-linecap="round" stroke-linejoin="round"><path d="M1 5H15M10 1L15 5L10 9"/></svg><div class="t" style="left:819.5px;top:1436.3px;font-size:16.2px;color:#1f74c9">Georgia Ramirez</div>

<!-- LEAD CARDS -->
<div class="a" style="left:1334px;top:744px;width:938px;height:122px;background:#fff;border-radius:8px 2px 2px 8px;box-shadow:0 0 3px 2px rgba(238,232,252,.95),0 0 8px 2px rgba(225,215,250,.5)"></div>
<div class="t" style="left:1367px;top:774px;font-size:22.6px;font-weight:bold;color:#6a3fbf">Joyce Howard -Vanilla Corp.</div>
<div class="t" style="left:1367px;top:811px;font-size:23.5px;color:#7a7a7a">joyce.howard@vanillacorp.com</div>
<div class="t m" style="left:1733px;top:774px;font-size:22.9px;color:#1f74c9">Lead Status</div>
<div class="t" style="left:1733px;top:811px;font-size:23.5px;color:#7a7a7a">Open</div>
<div class="t m" style="left:1902px;top:774px;font-size:23.5px;color:#1f74c9">Frequency</div>
<div class="t" style="left:1902px;top:811px;font-size:23.5px;color:#7a7a7a">Bi-weekly</div>
<div class="t m" style="left:2075px;top:774px;font-size:23.7px;color:#1f74c9">Last Outreach</div>
<div class="t" style="left:2075px;top:811px;font-size:23.5px;color:#7a7a7a">2 days ago</div>
<div class="a" style="left:1334px;top:892px;width:938px;height:122px;background:#fff;border-radius:8px 2px 2px 8px;box-shadow:0 0 3px 2px rgba(238,232,252,.95),0 0 8px 2px rgba(225,215,250,.5)"></div>
<div class="t" style="left:1367px;top:922px;font-size:22.6px;font-weight:bold;color:#6a3fbf">WalterEllzey - McMahan's, LLC</div>
<div class="t" style="left:1367px;top:959px;font-size:23.5px;color:#7a7a7a">walter.ellzey@mcmahans.com</div>
<div class="t m" style="left:1733px;top:922px;font-size:22.9px;color:#1f74c9">Lead Status</div>
<div class="t" style="left:1733px;top:959px;font-size:23.5px;color:#7a7a7a">Open</div>
<div class="t m" style="left:1902px;top:922px;font-size:23.5px;color:#1f74c9">Frequency</div>
<div class="t" style="left:1902px;top:959px;font-size:23.5px;color:#7a7a7a">Weekly</div>
<div class="t m" style="left:2075px;top:922px;font-size:23.7px;color:#1f74c9">Last Outreach</div>
<div class="t" style="left:2075px;top:959px;font-size:23.5px;color:#7a7a7a">1week ago</div>
<div class="a" style="left:1334px;top:1040px;width:938px;height:122px;background:#fff;border-radius:8px 2px 2px 8px;box-shadow:0 0 3px 2px rgba(238,232,252,.95),0 0 8px 2px rgba(225,215,250,.5)"></div>
<div class="t" style="left:1367px;top:1070px;font-size:22.6px;font-weight:bold;color:#d21c3c">AdrianAnglin - Hughes Hatcher</div>
<div class="t" style="left:1367px;top:1107px;font-size:23.5px;color:#7a7a7a">adrian.anglin@hughesh.com</div>
<div class="t m" style="left:1733px;top:1070px;font-size:22.9px;color:#d21c3c">Lead Status</div>
<div class="t" style="left:1733px;top:1107px;font-size:23.5px;color:#7a7a7a">Contacting</div>
<div class="t m" style="left:1902px;top:1070px;font-size:23.5px;color:#d21c3c">Frequency</div>
<div class="t" style="left:1902px;top:1107px;font-size:23.5px;color:#7a7a7a">Bi-monthly</div>
<div class="t m" style="left:2075px;top:1070px;font-size:23.7px;color:#d21c3c">Last Outreach</div>
<div class="t" style="left:2075px;top:1107px;font-size:23.5px;color:#7a7a7a">1 month ago</div>
<div class="a" style="left:1334px;top:1188px;width:938px;height:122px;background:#fff;border-radius:8px 2px 2px 8px;box-shadow:0 0 3px 2px rgba(238,232,252,.95),0 0 8px 2px rgba(225,215,250,.5)"></div>
<div class="t" style="left:1367px;top:1218px;font-size:22.6px;font-weight:bold;color:#1f74c9">Dinah Cole - Exact Solutions</div>
<div class="t" style="left:1367px;top:1255px;font-size:23.5px;color:#7a7a7a">dinah.cole@exact-solutions.com</div>
<div class="t m" style="left:1733px;top:1218px;font-size:22.9px;color:#1f74c9">Lead Status</div>
<div class="t" style="left:1733px;top:1255px;font-size:23.5px;color:#7a7a7a">Contacting</div>
<div class="t m" style="left:1902px;top:1218px;font-size:23.5px;color:#1f74c9">Frequency</div>
<div class="t" style="left:1902px;top:1255px;font-size:23.5px;color:#7a7a7a">Monthly</div>
<div class="t m" style="left:2075px;top:1218px;font-size:23.7px;color:#1f74c9">Last Outreach</div>
<div class="t" style="left:2075px;top:1255px;font-size:23.5px;color:#7a7a7a">3 months ago</div>
<div class="a" style="left:1334px;top:1336px;width:938px;height:122px;background:#fff;border-radius:8px 2px 2px 8px;box-shadow:0 0 3px 2px rgba(238,232,252,.95),0 0 8px 2px rgba(225,215,250,.5)"></div>
<div class="t" style="left:1367px;top:1366px;font-size:22.6px;font-weight:bold;color:#6a3fbf">Bennie Loving - Data Corp.</div>
<div class="t" style="left:1367px;top:1403px;font-size:23.5px;color:#7a7a7a">bennie.loving@datacorp.com</div>
<div class="t m" style="left:1733px;top:1366px;font-size:22.9px;color:#6a3fbf">Lead Status</div>
<div class="t" style="left:1733px;top:1403px;font-size:23.5px;color:#7a7a7a">Converted</div>
<div class="t m" style="left:1902px;top:1366px;font-size:23.5px;color:#6a3fbf">Frequency</div>
<div class="t" style="left:1902px;top:1403px;font-size:23.5px;color:#7a7a7a">Quarterly</div>
<div class="t m" style="left:2075px;top:1366px;font-size:23.7px;color:#6a3fbf">Last Outreach</div>
<div class="t" style="left:2075px;top:1403px;font-size:23.5px;color:#7a7a7a">6 months ago</div>
<!-- partial6 -->
<div class="a" style="left:1334px;top:1484px;width:938px;height:60px;background:#fff;border-radius:8px 2px 2px 8px;box-shadow:0 0 3px 2px rgba(238,232,252,.95),0 0 8px 2px rgba(225,215,250,.5)"></div>
<div class="a" style="left:2355px;top:209px;width:16px;height:966px;background:#dcdcdc;border-radius:8px"></div>
<div class="a" style="left:2355px;top:209px;width:16px;height:327px;background:#1e78d4;border-radius:8px"></div>

</body></html>
